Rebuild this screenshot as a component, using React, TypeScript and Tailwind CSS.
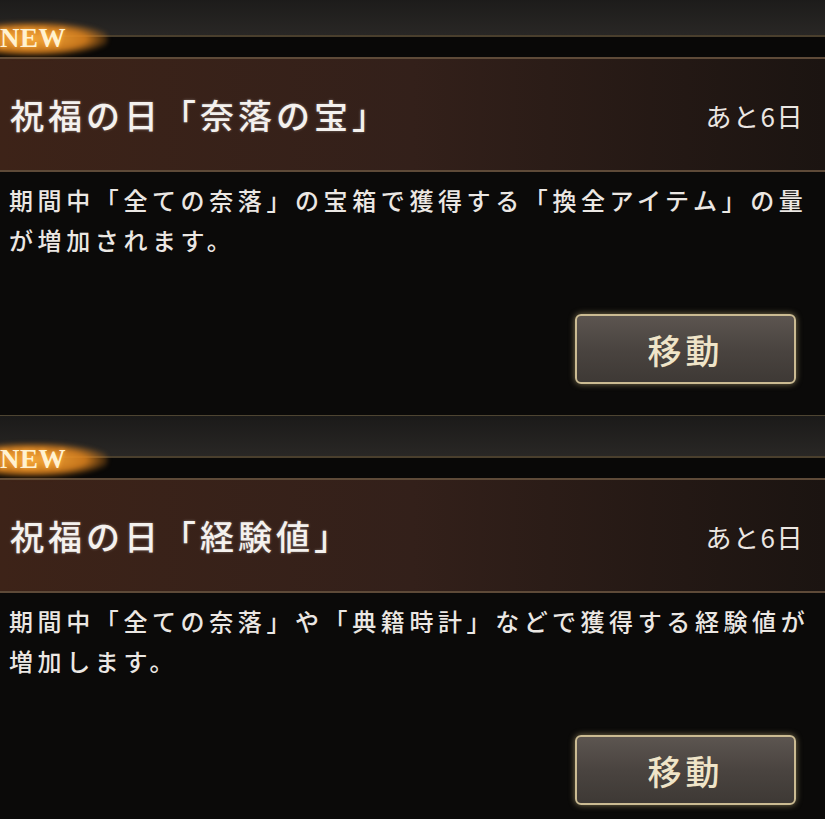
import type { ReactNode } from 'react';

const EVENTS = [
  {
    title: '祝福の日「奈落の宝」',
    lines: ['期間中「全ての奈落」の宝箱で獲得する「換全アイテム」の量', 'が増加されます。'],
  },
  {
    title: '祝福の日「経験値」',
    lines: ['期間中「全ての奈落」や「典籍時計」などで獲得する経験値が', '増加します。'],
  },
];

function NewBadge() {
  return (
    <div className="absolute left-0 top-[27px] h-[34px] w-[110px]">
      {/* orange glow behind the label */}
      <div className="absolute -left-[14px] top-[1px] h-[34px] w-[122px] rounded-full bg-[radial-gradient(ellipse_at_38%_50%,rgba(245,170,60,1)_0%,rgba(220,130,30,0.9)_50%,rgba(120,60,10,0)_76%)] blur-[2px]" />
      <span className="relative block pt-[2px] font-['Liberation_Serif',serif] text-[27px] font-bold leading-[30px] tracking-[0.5px] text-[#fff2d0] [text-shadow:0_0_4px_rgba(255,170,60,0.9)]">
        NEW
      </span>
    </div>
  );
}

function Section({ title, children }: { title: string; children: ReactNode }) {
  return (
    <section className="relative h-[421px]">
      <div className="h-px bg-[#4e4532]" />
      <div className="h-[40px] bg-gradient-to-b from-[#1b1a19] to-[#292725]" />
      <div className="h-[2px] bg-[#4a3f2d]" />
      <div className="h-[20px] bg-[#090807]" />
      <div className="flex h-[115px] items-center justify-between border-y-2 border-[#5e4a38] bg-gradient-to-r from-[#3d2318] via-[#33201a] to-[#1b1411] pl-[10px] pr-[21px]">
        <h2 className="text-[34px] font-medium tracking-[4px] text-[#f4f1ee] [text-shadow:0_0_3px_rgba(255,255,255,0.35)]">
          {title}
        </h2>
        <span className="pt-[2px] text-[26px] tracking-[1.5px] text-[#ebe6e2]">あと6日</span>
      </div>
      <div className="flex h-[243px] flex-col bg-[#0b0a09]">
        <p className="whitespace-nowrap pl-[9px] pt-[8px] text-[24px] font-medium leading-[40px] tracking-[4.6px] text-[#ebe7e3]">
          {children}
        </p>
        <div className="mt-auto mb-[31px] flex justify-end pr-[29px]">
          <button
            type="button"
            className="flex h-[70px] w-[221px] items-center justify-center rounded-[6px] border-2 border-[#cbbb92] bg-gradient-to-b from-[#5c5550] via-[#4a4440] to-[#3e3935] text-[34px] font-medium tracking-[4px] text-[#efe4c8] shadow-[0_0_6px_rgba(220,200,140,0.55)]"
          >
            移動
          </button>
        </div>
      </div>
      <NewBadge />
    </section>
  );
}

export default function App() {
  return (
    <div className="h-[819px] w-[825px] overflow-hidden bg-[#0b0a09] font-['Noto_Sans_CJK_JP',sans-serif]">
      <div className="-mt-[6px]">
        {EVENTS.map((ev) => (
          <Section key={ev.title} title={ev.title}>
            {ev.lines[0]}
            <br />
            {ev.lines[1]}
          </Section>
        ))}
      </div>
    </div>
  );
}
